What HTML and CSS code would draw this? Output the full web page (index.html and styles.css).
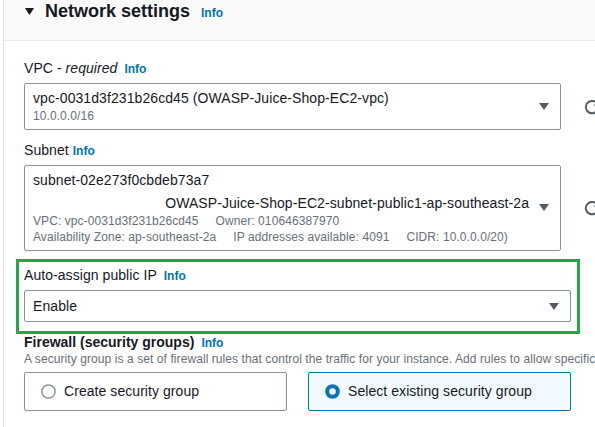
FILE: index.html
```html
<!DOCTYPE html>
<html>
<head>
<meta charset="utf-8">
<link rel="stylesheet" href="styles.css">
</head>
<body>
<div class="panel">
  <div class="panel-header">
    <svg class="header-caret" width="9" height="7" viewBox="0 0 9 7"><polygon points="0,0 9,0 4.5,7" fill="#16191f"/></svg>
    <h2 class="heading">Network settings</h2>
    <span class="info info-head">Info</span>
  </div>
  <div class="panel-body">
    <div class="field">
      <div class="label">VPC - <i>required</i><span class="info">Info</span></div>
      <div class="select-row">
        <div class="select">
          <div class="select-main">
            <div class="opt">vpc-0031d3f231b26cd45 (OWASP-Juice-Shop-EC2-vpc)</div>
            <div class="desc">10.0.0.0/16</div>
          </div>
          <svg class="caret" width="10" height="7" viewBox="0 0 10 7"><polygon points="0,0 10,0 5,7" fill="#545b64"/></svg>
        </div>
        <svg class="refresh" width="16" height="16" viewBox="0 0 16 16"><path d="M13.5 5.2 A6.2 6.2 0 1 0 14.2 8.6" fill="none" stroke="#545b64" stroke-width="2"/><polygon points="14.5,1.5 14.5,6.5 9.5,6.5" fill="#545b64"/></svg>
      </div>
    </div>
    <div class="field field-subnet">
      <div class="label">Subnet<span class="info info-tight">Info</span></div>
      <div class="select-row">
        <div class="select">
          <div class="select-main">
            <div class="opt">subnet-02e273f0cbdeb73a7</div>
            <div class="opt opt-tag">OWASP-Juice-Shop-EC2-subnet-public1-ap-southeast-2a</div>
            <div class="desc"><span class="tag">VPC: vpc-0031d3f231b26cd45</span><span class="tag">Owner: 010646387970</span></div>
            <div class="desc"><span class="tag">Availability Zone: ap-southeast-2a</span><span class="tag">IP addresses available: 4091</span><span class="tag">CIDR: 10.0.0.0/20)</span></div>
          </div>
          <svg class="caret" width="10" height="7" viewBox="0 0 10 7"><polygon points="0,0 10,0 5,7" fill="#545b64"/></svg>
        </div>
        <svg class="refresh" width="16" height="16" viewBox="0 0 16 16"><path d="M13.5 5.2 A6.2 6.2 0 1 0 14.2 8.6" fill="none" stroke="#545b64" stroke-width="2"/><polygon points="14.5,1.5 14.5,6.5 9.5,6.5" fill="#545b64"/></svg>
      </div>
    </div>
    <div class="highlight">
      <div class="label">Auto-assign public IP<span class="info">Info</span></div>
      <div class="select select-simple">
        <div class="select-main">
          <div class="opt">Enable</div>
        </div>
        <svg class="caret" width="10" height="7" viewBox="0 0 10 7"><polygon points="0,0 10,0 5,7" fill="#545b64"/></svg>
      </div>
    </div>
    <div class="label label-bold">Firewall (security groups)<span class="info">Info</span></div>
    <div class="hint">A security group is a set of firewall rules that control the traffic for your instance. Add rules to allow specific</div>
    <div class="tiles">
      <div class="tile">
        <svg class="radio" width="15" height="15" viewBox="0 0 15 15"><circle cx="7.5" cy="7.5" r="6.6" fill="#fff" stroke="#879596" stroke-width="1.5"/></svg>
        <span>Create security group</span>
      </div>
      <div class="tile tile-selected">
        <svg class="radio" width="15" height="15" viewBox="0 0 15 15"><circle cx="7.5" cy="7.5" r="5.3" fill="#fff" stroke="#0073bb" stroke-width="4"/></svg>
        <span>Select existing security group</span>
      </div>
    </div>
  </div>
</div>
</body>
</html>
```

FILE: styles.css
```css
html, body {
  margin: 0;
  padding: 0;
  background: #ffffff;
  overflow: hidden;
}
body {
  width: 595px;
  height: 427px;
  font-family: "Liberation Sans", Arial, sans-serif;
  color: #16191f;
  font-size: 14px;
  line-height: 20px;
}
.panel {
  margin-left: 3px;
  border-left: 1px solid #dfe3e3;
  min-height: 427px;
}
.panel-header {
  display: flex;
  align-items: baseline;
  background: #fafafa;
  border-bottom: 1px solid #eaeded;
  padding: 0 20px 18px 21px;
}
.header-caret {
  align-self: center;
  margin-right: 11px;
  flex-shrink: 0;
}
.heading {
  margin: 0;
  font-size: 18px;
  line-height: 22px;
  font-weight: bold;
}
.info {
  color: #0073bb;
  font-size: 12px;
  line-height: 14px;
  font-weight: bold;
  letter-spacing: 0;
  margin-left: 7px;
}
.info-head {
  margin-left: 11px;
}
.info-tight {
  margin-left: 4px;
}
.panel-body {
  padding: 17px 24px 0 20px;
}
.field {
  margin-bottom: 10px;
}
.field-subnet {
  margin-bottom: 8px;
}
.label {
  line-height: 20px;
  height: 20px;
  margin-bottom: 5px;
  white-space: nowrap;
  letter-spacing: 0.06px;
}
.label-bold {
  font-weight: bold;
  line-height: 17px;
  height: 17px;
  margin-bottom: 0;
  letter-spacing: 0;
}
.select-row {
  display: flex;
  align-items: center;
  width: 600px;
}
.select {
  display: flex;
  align-items: center;
  box-sizing: border-box;
  width: 537px;
  flex-shrink: 0;
  border: 1px solid #879596;
  border-radius: 2px;
  padding: 4px 11px 5px 8px;
  background: #fff;
}
.select-simple {
  width: 547px;
  padding: 5px 11px 5px 8px;
}
.select-main {
  flex: 1;
  min-width: 0;
}
.opt {
  white-space: nowrap;
  height: 20px;
  letter-spacing: 0.08px;
}
.opt-tag {
  text-align: right;
  margin-top: 3px;
}
.desc {
  font-size: 12px;
  line-height: 16px;
  height: 16px;
  color: #687078;
  white-space: nowrap;
  letter-spacing: 0.08px;
}
.tag {
  margin-right: 17px;
}
.tag:last-child {
  margin-right: 0;
}
.caret {
  flex-shrink: 0;
  margin-left: 10px;
}
.refresh {
  flex-shrink: 0;
  margin-left: 23px;
}
.highlight {
  border: 3px solid #21a848;
  margin: 0 -9px 0 -8px;
  padding: 3px 6px 9px 5px;
}
.hint {
  font-size: 12px;
  line-height: 16px;
  height: 16px;
  color: #687078;
  white-space: nowrap;
  letter-spacing: 0.08px;
  width: 600px;
}
.tiles {
  display: grid;
  grid-template-columns: 1fr 1fr;
  column-gap: 21px;
  margin-top: 5px;
}
.tile {
  display: flex;
  align-items: center;
  gap: 8px;
  border: 1px solid #879596;
  border-radius: 2px;
  padding: 8px 16px 9px 16px;
  height: 20px;
  white-space: nowrap;
  letter-spacing: 0.06px;
}
.tile-selected {
  background: #f1faff;
  border-color: #0073bb;
}
.radio {
  flex-shrink: 0;
}
```
